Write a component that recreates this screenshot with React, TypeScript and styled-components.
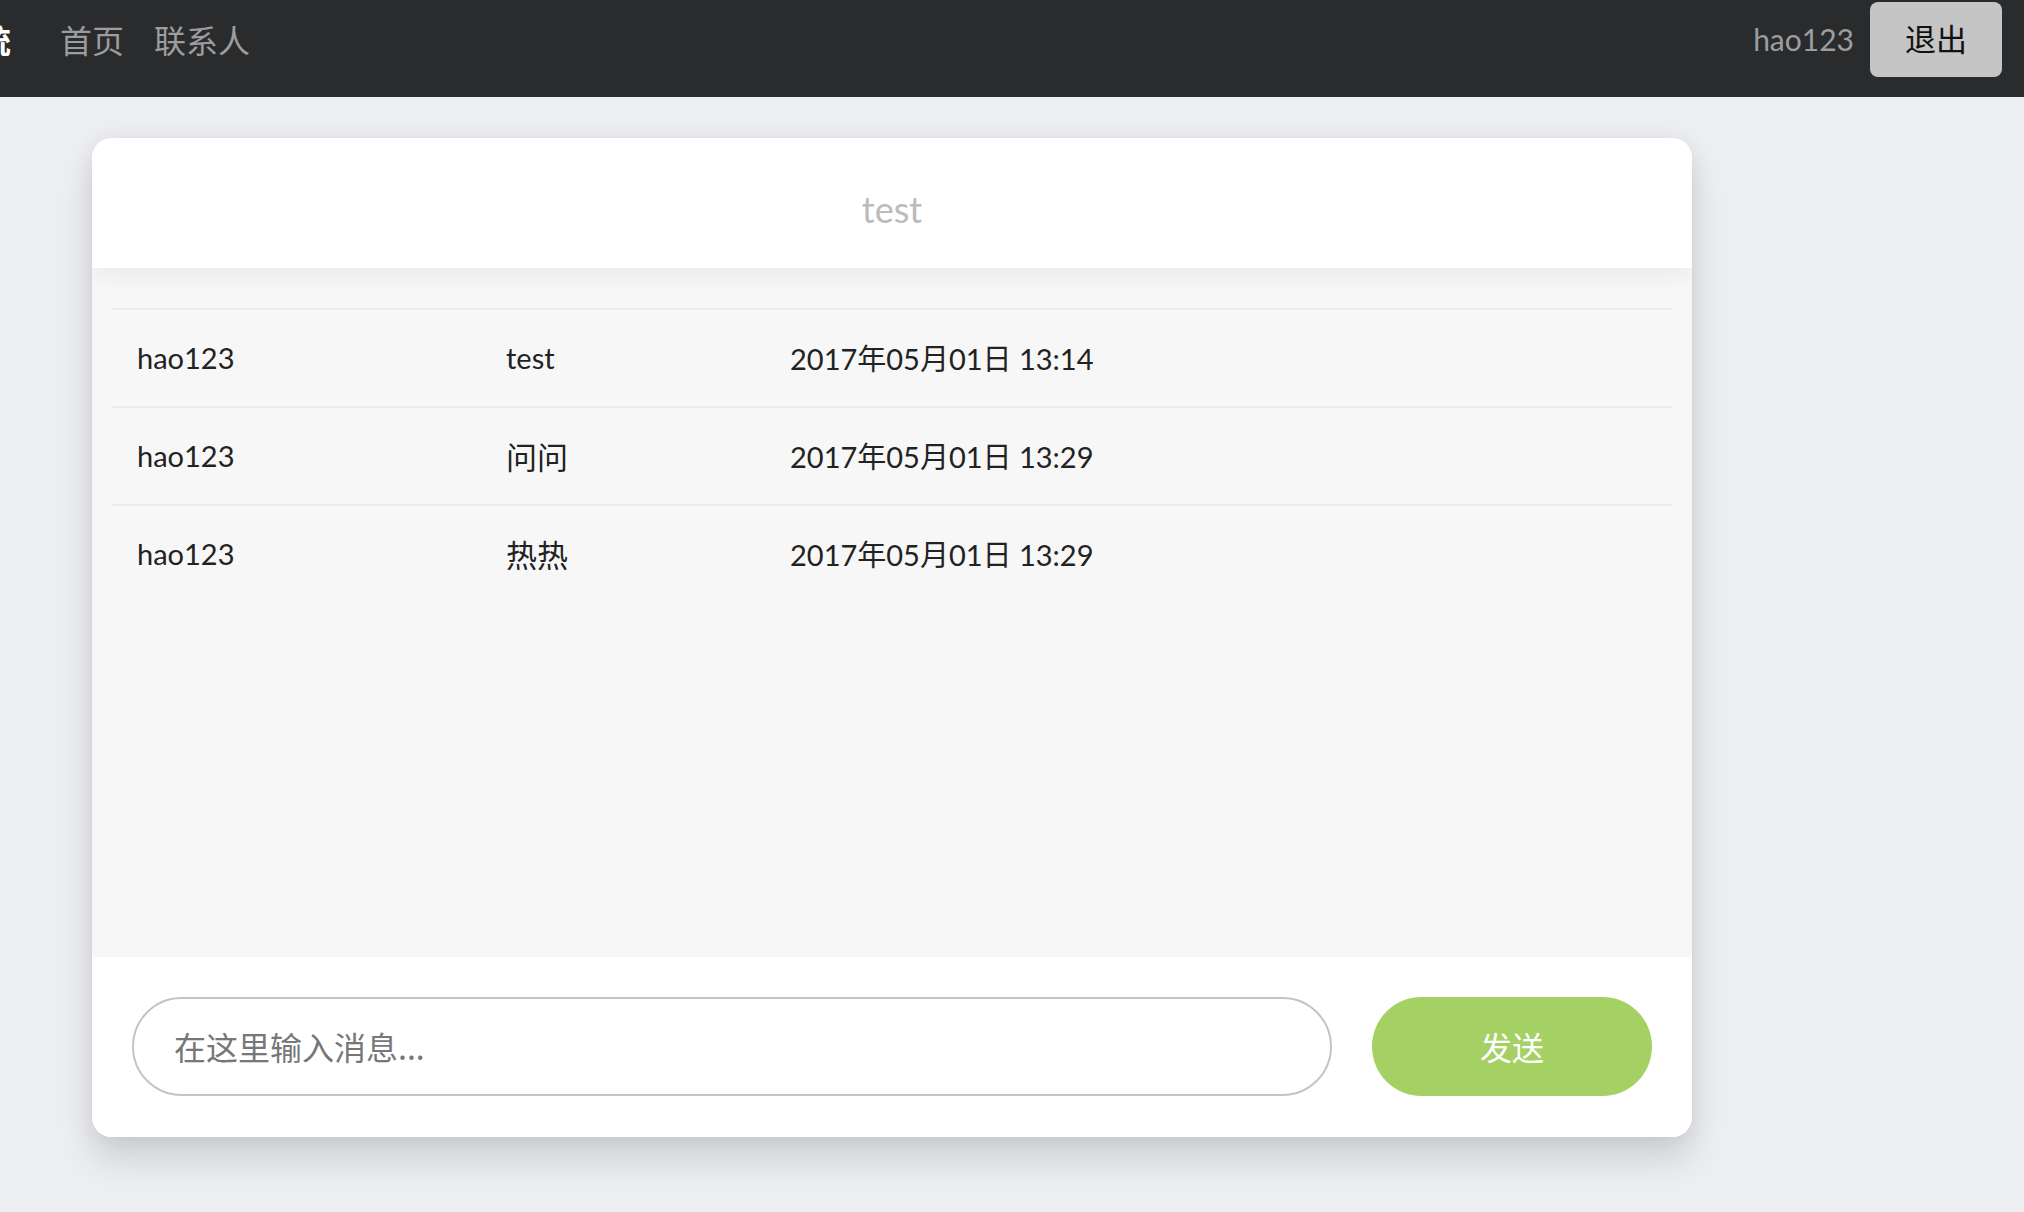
import React from "react";
import styled, { createGlobalStyle } from "styled-components";

const Global = createGlobalStyle`
  html, body { margin: 0; padding: 0; }
  body {
    background: #edeef2;
    font-family: Lato, "Noto Sans CJK SC", sans-serif;
    overflow-x: hidden;
    min-height: 1212px;
  }
  * { box-sizing: border-box; }
`;

const NavBar = styled.nav`
  height: 97px;
  background: #2a2b2d;
  display: flex;
  align-items: flex-start;
  justify-content: space-between;
  padding: 0 22px 0 0;
  overflow: hidden;
`;

const NavLeft = styled.div`
  height: 78px;
  display: flex;
  align-items: center;
`;

const Brand = styled.span`
  color: #ffffff;
  font-weight: 700;
  font-size: 32px;
  margin-left: -53px;
  margin-right: 49px;
  white-space: nowrap;
`;

const NavLink = styled.a`
  color: #9d9d9d;
  font-size: 32px;
  margin-right: 30px;
  text-decoration: none;
  font-family: "Noto Sans CJK SC", sans-serif;
`;

const NavRight = styled.div`
  height: 78px;
  display: flex;
  align-items: center;
  gap: 16px;
`;

const UserName = styled.span`
  color: #9d9d9d;
  font-size: 30px;
`;

const LogoutButton = styled.button`
  width: 132px;
  height: 75px;
  border: none;
  border-radius: 8px;
  background: #c5c5c5;
  color: #111;
  font-size: 31px;
  font-family: "Noto Sans CJK SC", sans-serif;
  padding: 0 0 4px;
  align-self: flex-start;
  margin-top: 2px;
`;

const Card = styled.section`
  width: 1600px;
  margin: 41px 0 0 92px;
  background: #ffffff;
  border-radius: 20px;
  overflow: hidden;
  box-shadow: 0 22px 34px rgba(0, 0, 0, 0.13), 0 0 22px rgba(0, 0, 0, 0.06);
`;

const CardHeader = styled.header`
  height: 130px;
  display: flex;
  align-items: center;
  justify-content: center;
  padding-top: 12px;
  background: #ffffff;
  position: relative;
  z-index: 1;
  box-shadow: 0 8px 22px rgba(0, 0, 0, 0.05);
`;

const Title = styled.h2`
  margin: 0;
  font-weight: 400;
  font-size: 36px;
  color: #bbbbbb;
`;

const MessageList = styled.div`
  height: 689px;
  background: #f7f7f7;
  padding: 40px 20px 0;
  overflow: auto;
`;

const MessageRow = styled.div`
  display: grid;
  grid-template-columns: 369px 284px 1fr;
  align-items: center;
  height: 98px;
  padding-left: 25px;
  padding-bottom: 2px;
  border-top: 2px solid #ececec;
  color: #222;
  font-size: 29px;
`;

const CjkText = styled.span`
  font-size: 31px;
  font-family: "Noto Sans CJK SC", sans-serif;
`;

const Footer = styled.footer`
  display: flex;
  gap: 40px;
  padding: 40px 40px 41px;
  background: #ffffff;
`;

const MessageInput = styled.input`
  width: 1200px;
  height: 99px;
  border: 2px solid #c4c4c8;
  border-radius: 50px;
  padding: 0 40px 2px;
  font-size: 32px;
  font-family: "Noto Sans CJK SC", sans-serif;
  color: #333;
  outline: none;
  &::placeholder { color: #777; }
`;

const SendButton = styled.button`
  width: 280px;
  height: 99px;
  border: none;
  border-radius: 50px;
  background: #a5d063;
  color: #ffffff;
  font-size: 32px;
  font-family: "Noto Sans CJK SC", sans-serif;
  padding: 0 0 2px;
`;

const messages = [
  { user: "hao123", text: "test", time: "2017年05月01日 13:14" },
  { user: "hao123", text: "问问", time: "2017年05月01日 13:29" },
  { user: "hao123", text: "热热", time: "2017年05月01日 13:29" },
];

const isCjk = (s: string) => /[\u4e00-\u9fff]/.test(s);

export default function App() {
  return (
    <>
      <Global />
      <NavBar>
        <NavLeft>
          <Brand>系统</Brand>
          <NavLink>首页</NavLink>
          <NavLink>联系人</NavLink>
        </NavLeft>
        <NavRight>
          <UserName>hao123</UserName>
          <LogoutButton>退出</LogoutButton>
        </NavRight>
      </NavBar>
      <Card>
        <CardHeader>
          <Title>test</Title>
        </CardHeader>
        <MessageList>
          {messages.map((m, i) => (
            <MessageRow key={i}>
              <span>{m.user}</span>
              {isCjk(m.text) ? <CjkText>{m.text}</CjkText> : <span>{m.text}</span>}
              <span>{m.time}</span>
            </MessageRow>
          ))}
        </MessageList>
        <Footer>
          <MessageInput placeholder="在这里输入消息..." />
          <SendButton>发送</SendButton>
        </Footer>
      </Card>
    </>
  );
}
